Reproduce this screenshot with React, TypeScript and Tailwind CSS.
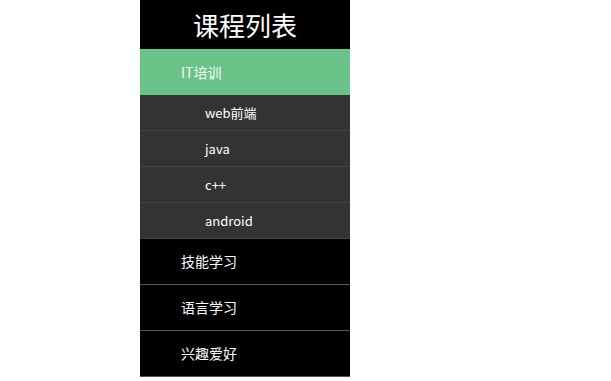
import React from "react";

const SUB_ITEMS = ["web前端", "java", "c++", "android"];
const MAIN_ITEMS = ["技能学习", "语言学习", "兴趣爱好"];

export default function App() {
  return (
    <div
      className="ml-[140px] w-[210px] bg-black text-white"
      style={{ fontFamily: '"Microsoft YaHei", "Noto Sans CJK SC", "Noto Sans", sans-serif' }}
    >
      {/* Title */}
      <div className="h-[49px] flex items-center justify-center text-[26px] leading-none">
        课程列表
      </div>

      {/* Active group */}
      <div className="h-[46px] flex items-center pl-[41px] bg-[#6bc389] text-[14px] text-[#f4fbf6]">
        IT培训
      </div>
      <ul>
        {SUB_ITEMS.map((s) => (
          <li
            key={s}
            className="h-[36px] flex items-center pl-[65px] bg-[#333333] border-b border-[#444444] text-[13px]"
          >
            {s}
          </li>
        ))}
      </ul>

      {/* Other groups */}
      <ul>
        {MAIN_ITEMS.map((m) => (
          <li
            key={m}
            className="h-[46px] flex items-center pl-[41px] border-b border-[#555555] text-[14px]"
          >
            {m}
          </li>
        ))}
      </ul>
    </div>
  );
}
